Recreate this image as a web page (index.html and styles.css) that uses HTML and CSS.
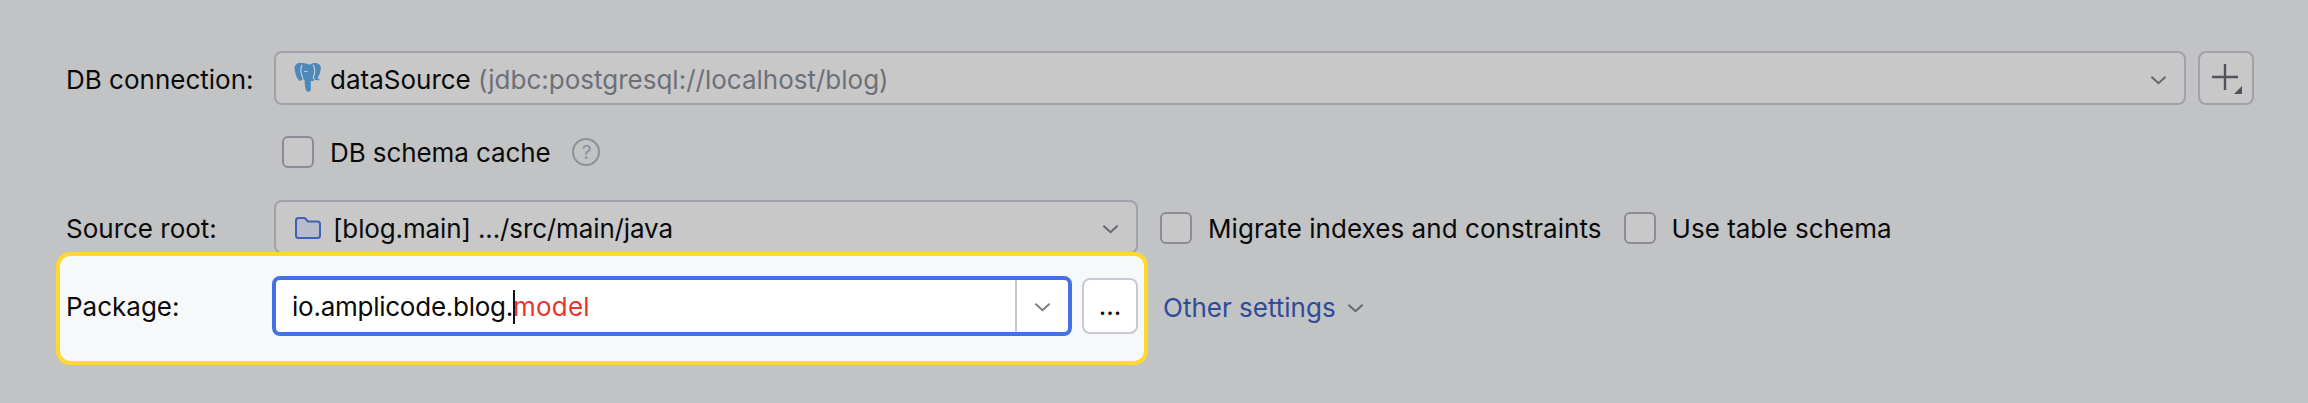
FILE: index.html
```html
<!DOCTYPE html>
<html lang="en">
<head>
    <meta charset="UTF-8">
    <title>Generate entity</title>
    <link rel="stylesheet" href="styles.css">
</head>
<body>
    <div class="form">
        <div class="row row-db">
            <span class="label">DB connection:</span>
            <div class="combo combo-wide">
                <svg class="icon pg-icon" width="27" height="29" viewBox="0 0 24 26">
                    <path d="M5 0C1.500 0 0 3 .5 6 1 10 3 15 5 16c1.500.5 2.500-1 3-2 .5 1 1 1.500 1.500 2 0 4 .5 8 2 9.500 1.500 1 3.500 0 3.500-2.500v-7c1.500.5 3 0 3.500-1 1.500 0 3.500 1 4.500 0l-2-1.500C22.500 11 24 7 24 4.500 24 1.500 21.500 0 18.500 0c-2 0-3 .5-4.500 1.500C12.500.5 9 0 5 0z" fill="#4d88b8"/>
                    <path d="M7 1.500C5.500 5 6 10 8 14M17 1.500c2 3.500 2 8.500 0 11.500M18.500 14.500c-1-.5-1.500-1.500-1.500-2M9 7.500c1 .5 2 .5 3 0" fill="none" stroke="#c4d3de" stroke-width="1"/>
                </svg>
                <span class="combo-text">dataSource <span class="muted">(jdbc:postgresql://localhost/blog)</span></span>
                <svg class="chevron" width="17" height="10" viewBox="0 0 18 10"><path d="M1.500 1.500 9 8.500l7.500-7" fill="none" stroke="#65666e" stroke-width="2"/></svg>
            </div>
            <div class="add-btn">
                <svg class="plus" width="26" height="26" viewBox="0 0 26 26"><path d="M13 0v26M0 13h26" stroke="#50525c" stroke-width="2.400"/></svg>
                <svg class="corner" width="8" height="8" viewBox="0 0 8 8"><path d="M8 0v8H0z" fill="#50525c"/></svg>
            </div>
        </div>

        <div class="row row-cache">
            <label class="check check-cache"><span class="box"></span>DB schema cache</label>
            <span class="help">?</span>
        </div>

        <div class="row row-source">
            <span class="label">Source root:</span>
            <div class="combo combo-source">
                <svg class="icon" width="28" height="24" viewBox="0 0 28 24">
                    <path d="M2 4.500C2 3 3 2 4.500 2h6.200l3.300 3.500h9.500C25 5.500 26 6.500 26 8v11.500c0 1.500-1 2.500-2.500 2.500h-19C3 22 2 21 2 19.500z" fill="#b7bccb" stroke="#3d62b8" stroke-width="2"/>
                </svg>
                <span class="combo-text">[blog.main] .../src/main/java</span>
                <svg class="chevron" width="17" height="10" viewBox="0 0 18 10"><path d="M1.500 1.500 9 8.500l7.500-7" fill="none" stroke="#65666e" stroke-width="2"/></svg>
            </div>
            <label class="check check-migrate"><span class="box"></span>Migrate indexes and constraints</label>
            <label class="check check-schema"><span class="box"></span>Use table schema</label>
        </div>

        <div class="row row-package">
            <div class="highlight">
                <span class="label label-package">Package:</span>
                <div class="package-input">
                    <span class="package-text">io.amplicode.blog.<span class="caret"></span><span class="red">model</span></span>
                    <span class="package-arrow">
                        <svg width="17" height="10" viewBox="0 0 18 10"><path d="M1.500 1.500 9 8.500l7.500-7" fill="none" stroke="#7b7c85" stroke-width="2"/></svg>
                    </span>
                </div>
                <div class="dots-btn">...</div>
            </div>
            <a class="other-link">Other settings</a>
            <svg class="other-chevron" width="17" height="10" viewBox="0 0 18 10"><path d="M1.500 1.500 9 8.500l7.500-7" fill="none" stroke="#65666e" stroke-width="2"/></svg>
        </div>
    </div>
</body>
</html>
```

FILE: styles.css
```css
html, body {
    margin: 0;
    height: 100%;
}
body {
    width: 2308px;
    height: 403px;
    overflow: hidden;
    background-color: #c2c3c5;
    font-family: Inter, "Liberation Sans", sans-serif;
    font-size: 26px;
    color: #0a0a0a;
}
.form {
    padding: 51px 54px 0 66px;
}
.row {
    display: flex;
    align-items: center;
}
.label {
    flex: none;
    width: 208px;
    margin-top: 2px;
}
.combo {
    box-sizing: border-box;
    height: 54px;
    display: flex;
    align-items: center;
    background: #c8c8c9;
    border: 2px solid #a0a1aa;
    border-radius: 8px;
    padding-left: 18px;
    padding-top: 2px;
}
.combo-wide {
    flex: 1;
}
.combo-source {
    flex: none;
    width: 864px;
}
.combo-text {
    flex: 1;
    white-space: nowrap;
}
.icon {
    flex: none;
    margin-right: 9px;
}
.pg-icon {
    margin-top: -3px;
}
.combo-source .icon {
    margin-right: 11px;
}
.combo-source .combo-text {
    letter-spacing: -0.13px;
}
.chevron {
    flex: none;
    margin: 2px 17px 0 0;
}
.muted {
    color: #6e7078;
}
.add-btn {
    box-sizing: border-box;
    flex: none;
    position: relative;
    width: 56px;
    height: 54px;
    margin-left: 12px;
    display: flex;
    align-items: center;
    justify-content: center;
    background: #c8c8c9;
    border: 2px solid #a0a1aa;
    border-radius: 8px;
}
.plus {
    margin: -2px 2px 0 0;
}
.corner {
    position: absolute;
    right: 10px;
    bottom: 9px;
}
.row-cache {
    margin-top: 31px;
    height: 32px;
    padding-left: 216px;
}
.check {
    display: flex;
    align-items: center;
    white-space: nowrap;
}
.check-cache {
    letter-spacing: -0.1px;
}
.box {
    box-sizing: border-box;
    flex: none;
    width: 32px;
    height: 32px;
    margin-right: 16px;
    background: #c8c8c9;
    border: 2px solid #8b8c95;
    border-radius: 6px;
}
.help {
    box-sizing: border-box;
    width: 28px;
    height: 28px;
    margin-left: 22px;
    display: flex;
    align-items: center;
    justify-content: center;
    border: 2px solid #8e8f98;
    border-radius: 50%;
    color: #8e8f98;
    font-size: 19px;
}
.row-source {
    margin-top: 32px;
}
.check-migrate {
    margin-left: 22px;
    margin-top: 2px;
    letter-spacing: 0.05px;
}
.check-schema {
    margin-left: 22px;
    margin-top: 2px;
}
.row-package {
    margin-top: -2px;
    position: relative;
}
.highlight {
    box-sizing: border-box;
    flex: none;
    display: flex;
    align-items: flex-start;
    width: 1092px;
    height: 113px;
    margin-left: -10px;
    padding: 20px 0 0 6px;
    background: #f7f8fa;
    border: 4px solid #ffd92e;
    border-radius: 14px;
}
.label-package {
    width: 206px;
    margin-top: 0;
    line-height: 62px;
}
.package-input {
    box-sizing: border-box;
    flex: none;
    display: flex;
    align-items: stretch;
    width: 800px;
    height: 60px;
    background: #fff;
    border: 4px solid #4470e6;
    border-radius: 8px;
}
.package-text {
    flex: 1;
    padding-left: 16px;
    line-height: 54px;
    white-space: nowrap;
    letter-spacing: -0.25px;
}
.caret {
    display: inline-block;
    width: 2px;
    height: 34px;
    margin-right: -2px;
    vertical-align: -8px;
    background: #111;
}
.red {
    color: #e8352a;
    letter-spacing: 0.2px;
}
.package-arrow {
    flex: none;
    width: 51px;
    padding-top: 2px;
    display: flex;
    align-items: center;
    justify-content: center;
    border-left: 2px solid #c5c7cf;
}
.dots-btn {
    box-sizing: border-box;
    flex: none;
    width: 56px;
    height: 56px;
    margin: 2px 0 0 10px;
    text-align: center;
    line-height: 52px;
    background: #fff;
    border: 2px solid #c8cad3;
    border-radius: 8px;
}
.other-link {
    margin-left: 15px;
    margin-top: -2px;
    color: #2f4b97;
}
.other-chevron {
    margin: -2px 0 0 11px;
}
```
